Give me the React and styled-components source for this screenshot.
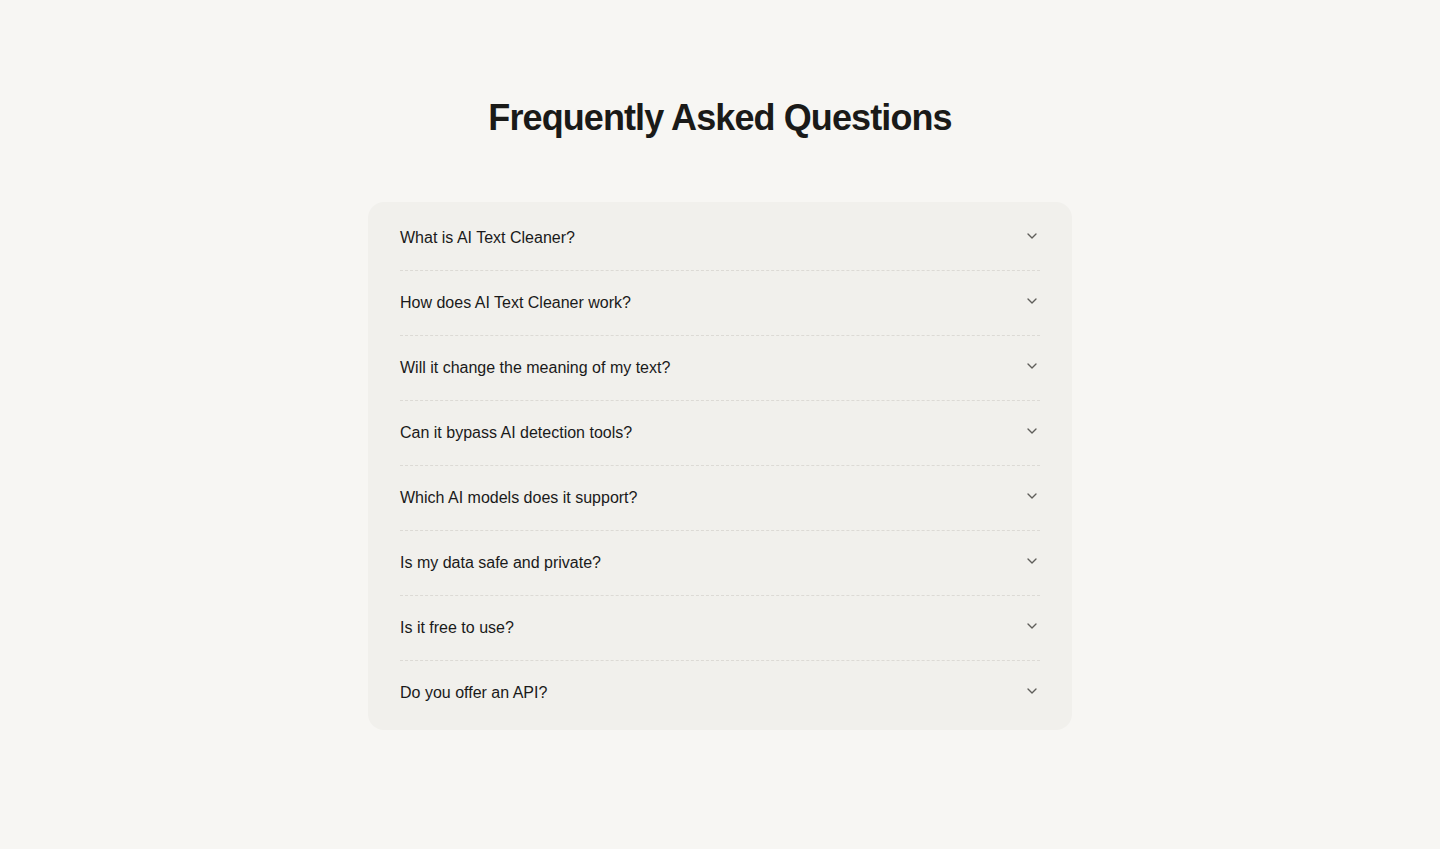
import styled, { createGlobalStyle } from 'styled-components';
import { ChevronDown } from 'lucide-react';

const GlobalStyle = createGlobalStyle`
  body {
    margin: 0;
    background: #f7f6f3;
    font-family: "Liberation Sans", Arial, sans-serif;
    color: #1a1a1a;
  }
`;

const questions = [
  'What is AI Text Cleaner?',
  'How does AI Text Cleaner work?',
  'Will it change the meaning of my text?',
  'Can it bypass AI detection tools?',
  'Which AI models does it support?',
  'Is my data safe and private?',
  'Is it free to use?',
  'Do you offer an API?',
];

const Section = styled.section`
  display: flex;
  flex-direction: column;
  align-items: center;
  padding: 96px 0 120px;
`;

const Title = styled.h2`
  margin: 0 0 62px;
  font-size: 36px;
  line-height: 44px;
  font-weight: 700;
  letter-spacing: -0.025em;
  color: #1a1a18;
`;

const Card = styled.div`
  width: 704px;
  box-sizing: border-box;
  padding: 4px 32px 5px;
  background: #f1f0ec;
  border-radius: 16px;
`;

const Row = styled.button`
  display: flex;
  align-items: center;
  justify-content: space-between;
  width: 100%;
  padding: 20px 0;
  background: none;
  border: none;
  border-bottom: ${({ last }) => (last ? 'none' : '1px dashed #dcdad5')};
  font: inherit;
  font-size: 16px;
  line-height: 24px;
  color: #1a1a1a;
  text-align: left;
  cursor: pointer;
`;

const Chevron = styled(ChevronDown)`
  flex-shrink: 0;
  color: #5f5e5a;
  margin-top: -4px;
`;

export default function App() {
  return (
    <>
      <GlobalStyle />
      <Section>
        <Title>Frequently Asked Questions</Title>
        <Card>
          {questions.map((q, i) => (
            <Row key={q} last={i === questions.length - 1}>
              <span>{q}</span>
              <Chevron size={16} strokeWidth={2} />
            </Row>
          ))}
        </Card>
      </Section>
    </>
  );
}
